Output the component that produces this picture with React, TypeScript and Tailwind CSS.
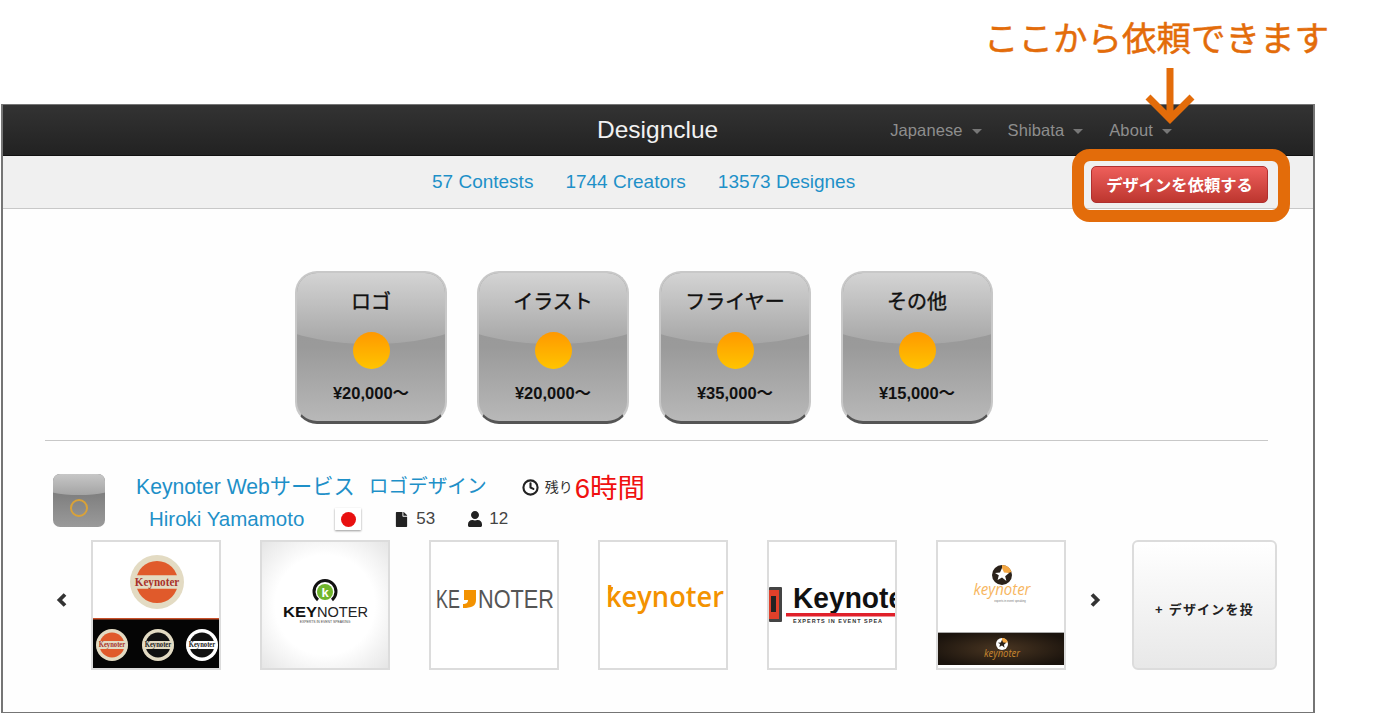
import type { ReactNode } from "react";
import { Clock } from "lucide-react";
import { FaFile, FaUser } from "react-icons/fa";

const font = "font-['Liberation_Sans','Noto_Sans_CJK_JP',sans-serif]";

const categories = [
    { name: "ロゴ", price: "¥20,000〜" },
    { name: "イラスト", price: "¥20,000〜" },
    { name: "フライヤー", price: "¥35,000〜" },
    { name: "その他", price: "¥15,000〜" },
];

function Caret() {
    return <span className="ml-[9px] mt-[2px] h-0 w-0 border-x-[5px] border-t-[5px] border-x-transparent border-t-[#777]" />;
}

function NavItem({ label, className }: { label: string; className: string }) {
    return (
        <span className={`flex items-center text-[16.5px] tracking-[0.1px] text-[#8e8e8e] ${className}`}>
            {label}
            <Caret />
        </span>
    );
}

function CategoryCard({ name, price }: { name: string; price: string }) {
    return (
        <div className="relative flex h-[153px] w-[152px] flex-col items-center overflow-hidden rounded-[22px] border-2 border-[#c8c8c8] border-b-[3px] border-b-[#555] bg-gradient-to-b from-[#979797] via-[#9a9a9a] to-[#b8b8b8]">
            <div className="absolute inset-x-[-40px] top-[-60px] h-[131px] rounded-b-[50%_41px] bg-[linear-gradient(to_bottom,#d4d4d4_45%,#a6a6a6_100%)]" />
            <span className="relative mt-[15px] text-[20px] leading-[28px] text-[#111] [-webkit-text-stroke:0.4px_#111]">{name}</span>
            <span className="relative mt-[16px] h-[37px] w-[37px] rounded-full bg-gradient-to-b from-[#ff9800] to-[#ffc400]" />
            <span className="relative mt-[14px] text-[16.5px] font-bold leading-[20px] text-[#111]">{price}</span>
        </div>
    );
}

function Thumb({ children }: { children: ReactNode }) {
    return (
        <div className="h-[130px] w-[130px] shrink-0 overflow-hidden border-2 border-[#dcdcdc]">
            <svg viewBox="0 0 126 126" className="block h-full w-full">
                {children}
            </svg>
        </div>
    );
}

function Badge({ x, y, r, band, ring, ink }: { x: number; y: number; r: number; band: string; ring: string; ink: string }) {
    const strip = r * 0.5;
    return (
        <g>
            <circle cx={x} cy={y} r={r} fill={ring} />
            <circle cx={x} cy={y} r={r * 0.78} fill={band} />
            <rect x={x - r * 0.95} y={y - strip / 2} width={r * 1.9} height={strip} fill={ring} />
            <text x={x} y={y + r * 0.14} textAnchor="middle" fontSize={r * 0.46} textLength={r * 1.65} lengthAdjust="spacingAndGlyphs" fontFamily="Liberation Serif" fontWeight="bold" fill={ink}>
                Keynoter
            </text>
        </g>
    );
}

function LogoOne() {
    return (
        <Thumb>
            <rect width="126" height="126" fill="#fff" />
            <rect y="76" width="126" height="50" fill="#050505" />
            <rect y="76" width="126" height="1.5" fill="#c9502a" />
            <Badge x={64} y={40} r={27} band="#e05a2b" ring="#e3dbc3" ink="#a8322a" />
            <Badge x={19} y={103} r={16} band="#e05a2b" ring="#e3dbc3" ink="#a8322a" />
            <Badge x={65} y={103} r={16} band="#111" ring="#e3dbc3" ink="#222" />
            <Badge x={109} y={103} r={16} band="#111" ring="#fff" ink="#222" />
        </Thumb>
    );
}

function LogoTwo() {
    return (
        <Thumb>
            <defs>
                <radialGradient id="glow" cx="50%" cy="50%" r="72%">
                    <stop offset="55%" stopColor="#ffffff" />
                    <stop offset="100%" stopColor="#e4e4e4" />
                </radialGradient>
            </defs>
            <rect width="126" height="126" fill="url(#glow)" />
            <path d="M56 58A11 11 0 1 1 70 58" fill="none" stroke="#111" strokeWidth="3" />
            <circle cx="63" cy="50" r="8" fill="#6fb52c" />
            <text x="63" y="55" textAnchor="middle" fontSize="13" fontWeight="bold" fontFamily="Liberation Sans" fill="#fff">k</text>
            <text x="21" y="75" fontSize="15.5" textLength="34" lengthAdjust="spacingAndGlyphs" fontFamily="Liberation Sans" fontWeight="bold" fill="#111">KEY</text>
            <text x="55" y="75" fontSize="15.5" textLength="51" lengthAdjust="spacingAndGlyphs" fontFamily="Liberation Sans" fill="#222">NOTER</text>
            <text x="63" y="81" textAnchor="middle" fontSize="3.4" fontFamily="Liberation Sans" fill="#444">EXPERTS IN EVENT SPEAKING</text>
        </Thumb>
    );
}

function LogoThree() {
    return (
        <Thumb>
            <rect width="126" height="126" fill="#fff" />
            <text x="5" y="66" fontSize="25" textLength="24" lengthAdjust="spacingAndGlyphs" fontFamily="Liberation Sans" fill="#555">KE</text>
            <path d="M33 48h12v10c0 6-4 8-13 8v-4c3 0 5-1 5-4h-4z" fill="#f39200" />
            <text x="47" y="66" fontSize="25" textLength="76" lengthAdjust="spacingAndGlyphs" fontFamily="Liberation Sans" fill="#555">NOTER</text>
        </Thumb>
    );
}

function LogoFour() {
    return (
        <Thumb>
            <rect width="126" height="126" fill="#fff" />
            <path d="M8 45h5c0 3-1 5-4 7l-1-2c1-1 2-1 2-2H8z" fill="#f39200" />
            <text x="6" y="65" fontSize="29" textLength="118" lengthAdjust="spacingAndGlyphs" fontFamily="Open Sans" fontWeight="600" fill="#f39200">keynoter</text>
        </Thumb>
    );
}

function LogoFive() {
    return (
        <Thumb>
            <rect width="126" height="126" fill="#fff" />
            <rect x="0" y="45" width="13" height="35" rx="1" fill="#444" />
            <rect x="0" y="48" width="10" height="29" fill="#e0402a" />
            <rect x="2" y="54" width="5" height="16" fill="#222" />
            <text x="24" y="66" fontSize="29" textLength="122" lengthAdjust="spacingAndGlyphs" fontWeight="bold" fontFamily="Liberation Sans" fill="#111">Keynoter</text>
            <rect x="17" y="71" width="110" height="3.5" fill="#e0202a" />
            <text x="24" y="81" fontSize="5.5" fontWeight="bold" letterSpacing="1" fontFamily="Liberation Sans" fill="#333">EXPERTS IN EVENT SPEA</text>
        </Thumb>
    );
}

function StarMark({ x, y, r, disc, star }: { x: number; y: number; r: number; disc: string; star: string }) {
    return (
        <g transform={`translate(${x} ${y}) scale(${r / 10})`}>
            <circle r="10" fill={disc} />
            <path d="M0 0L0 -10A10 10 0 0 1 9.5 -3z" fill="#f5a742" />
            <path d="M0 -7l2 4.6 5 .4-3.8 3.2 1.2 4.9L0 2.5-4.4 5.1l1.2-4.9L-7 -2l5-.4z" fill={star} />
        </g>
    );
}

function LogoSix() {
    return (
        <Thumb>
            <defs>
                <radialGradient id="band" cx="50%" cy="50%" r="60%">
                    <stop offset="0%" stopColor="#4a3622" />
                    <stop offset="100%" stopColor="#1a130d" />
                </radialGradient>
            </defs>
            <rect width="126" height="126" fill="#fff" />
            <StarMark x={64} y={33} r={10} disc="#2a211a" star="#fff" />
            <text x="64" y="53" textAnchor="middle" fontSize="16" textLength="57" lengthAdjust="spacingAndGlyphs" fontStyle="italic" fontFamily="Open Sans" fill="#f7b660">keynoter</text>
            <text x="72" y="60" textAnchor="middle" fontSize="2.8" fontFamily="Liberation Sans" fill="#777">experts in event speaking</text>
            <rect y="90" width="126" height="1" fill="#aaa" />
            <rect y="91" width="126" height="32" fill="url(#band)" />
            <StarMark x={64} y={102} r={6} disc="#fff" star="#2a211a" />
            <text x="64" y="115" textAnchor="middle" fontSize="10" textLength="36" lengthAdjust="spacingAndGlyphs" fontStyle="italic" fontFamily="Open Sans" fill="#c8862e">keynoter</text>
        </Thumb>
    );
}

function Chevron({ points, className }: { points: string; className: string }) {
    return (
        <svg width="11" height="14" viewBox="0 0 11 14" className={className}>
            <polyline points={points} fill="none" stroke="#333" strokeWidth="3.8" />
        </svg>
    );
}

export default function App() {
    return (
        <div className={`relative h-[714px] w-[1398px] overflow-hidden bg-white ${font}`}>
            <div className="flex h-[104px] justify-end pr-[69px] pt-[15px]">
                <span className="text-[34.5px] leading-[48px] text-[#e36c0a] [-webkit-text-stroke:0.5px_#e36c0a]">ここから依頼できます</span>
            </div>

            <div className="ml-px flex h-[609px] w-[1314px] flex-col border-y-[1.5px] border-r-2 border-l-2 border-[#757575] bg-[#fefefe]">
                <nav className="flex h-[51px] shrink-0 items-center border-b border-[#111] bg-gradient-to-b from-[#333] to-[#222]">
                    <span className="ml-[594px] text-[24.5px] leading-none text-[#f2f2f2]">Designclue</span>
                    <NavItem label="Japanese" className="ml-[172px]" />
                    <NavItem label="Shibata" className="ml-[26px]" />
                    <NavItem label="About" className="ml-[26px]" />
                </nav>

                <div className="flex h-[53px] shrink-0 items-center gap-[32px] border-b border-[#c8c8c8] bg-[#f0f0f0] pl-[429px] text-[19px] text-[#1e90c8]">
                    <span>57 Contests</span>
                    <span>1744 Creators</span>
                    <span>13573 Designes</span>
                </div>

                <div className="flex gap-[30px] pl-[292px] pt-[62px]">
                    {categories.map((c) => (
                        <CategoryCard key={c.name} name={c.name} price={c.price} />
                    ))}
                </div>

                <div className="ml-[42px] mt-[16px] w-[1223px] border-t border-[#c8c8c8]" />

                <div className="ml-[50px] mt-[33px] flex h-[54px]">
                    <div className="relative h-[53px] w-[52px] overflow-hidden rounded-[7px] bg-gradient-to-b from-[#707070] to-[#9a9a9a]">
                        <div className="absolute inset-x-[-10px] top-[-10px] h-[31px] rounded-b-[50%_8px] bg-gradient-to-b from-[#d8d8d8] to-[#a4a4a4]" />
                        <div className="absolute left-[17px] top-[25px] h-[18px] w-[18px] rounded-full border-2 border-[#d9a238]" />
                    </div>
                    <div className="ml-[31px] flex flex-col">
                        <div className="flex h-[26px] items-center">
                            <span className="whitespace-pre text-[21.2px] text-[#1e90c8]">Keynoter Webサービス</span>
                            <span className="ml-[14px] whitespace-pre text-[19.7px] text-[#1e90c8]">ロゴデザイン</span>
                            <Clock size={17} strokeWidth={3} className="ml-[35px] text-[#222]" />
                            <span className="ml-[6px] text-[14px] text-[#333]">残り</span>
                            <span className="ml-[2px] mt-[3px] text-[27.5px] leading-none text-[#f01010]">6時間</span>
                        </div>
                        <div className="ml-[13px] mt-[7px] flex h-[24px] items-center">
                            <span className="text-[20.5px] text-[#1e90c8]">Hiroki Yamamoto</span>
                            <span className="ml-[31px] flex h-[22px] w-[26px] items-center justify-center bg-white shadow-[0_1px_2px_#999]">
                                <span className="h-[15px] w-[15px] rounded-full bg-[#e81010]" />
                            </span>
                            <FaFile size={15} className="ml-[33px] text-[#222]" />
                            <span className="ml-[7px] text-[17px] text-[#444]">53</span>
                            <FaUser size={16} className="ml-[32px] text-[#222]" />
                            <span className="ml-[6px] text-[17px] text-[#444]">12</span>
                        </div>
                    </div>
                </div>

                <div className="mt-[12px] flex items-center">
                    <Chevron points="9,1.5 3.5,7 9,12.5" className="ml-[53px] mt-[-10px]" />
                    <div className="ml-[24px] flex gap-[39px]">
                        <LogoOne />
                        <LogoTwo />
                        <LogoThree />
                        <LogoFour />
                        <LogoFive />
                        <LogoSix />
                    </div>
                    <Chevron points="2,1.5 7.5,7 2,12.5" className="ml-[24px] mt-[-10px]" />
                    <div className="ml-[31px] flex h-[130px] w-[145px] items-center justify-center overflow-hidden whitespace-nowrap rounded-[6px] border-2 border-[#dcdcdc] bg-gradient-to-b from-white to-[#e8e8e8] pt-[10px] text-[13px] font-bold tracking-[1.2px] text-[#222]">
                        + デザインを投
                    </div>
                </div>
            </div>

            {/* orange callout drawn over the page */}
            <svg className="absolute left-[1145px] top-[68px]" width="50" height="56" viewBox="0 0 50 56">
                <path d="M25 0V50M3 29L25 51L47 29" fill="none" stroke="#e36c0a" strokeWidth="7" />
            </svg>
            <div className="absolute left-[1072px] top-[149px] flex h-[73px] w-[218px] items-center justify-center rounded-[18px] border-[12px] border-[#e36c0a] pb-[2px] pr-[3px]">
                <span className="flex h-[37px] w-[177px] items-center justify-center rounded-[5px] border border-[#b03030] bg-gradient-to-b from-[#ee5f5b] to-[#bd362f] pt-[2px] text-[16.3px] font-bold text-white">
                    デザインを依頼する
                </span>
            </div>
        </div>
    );
}
